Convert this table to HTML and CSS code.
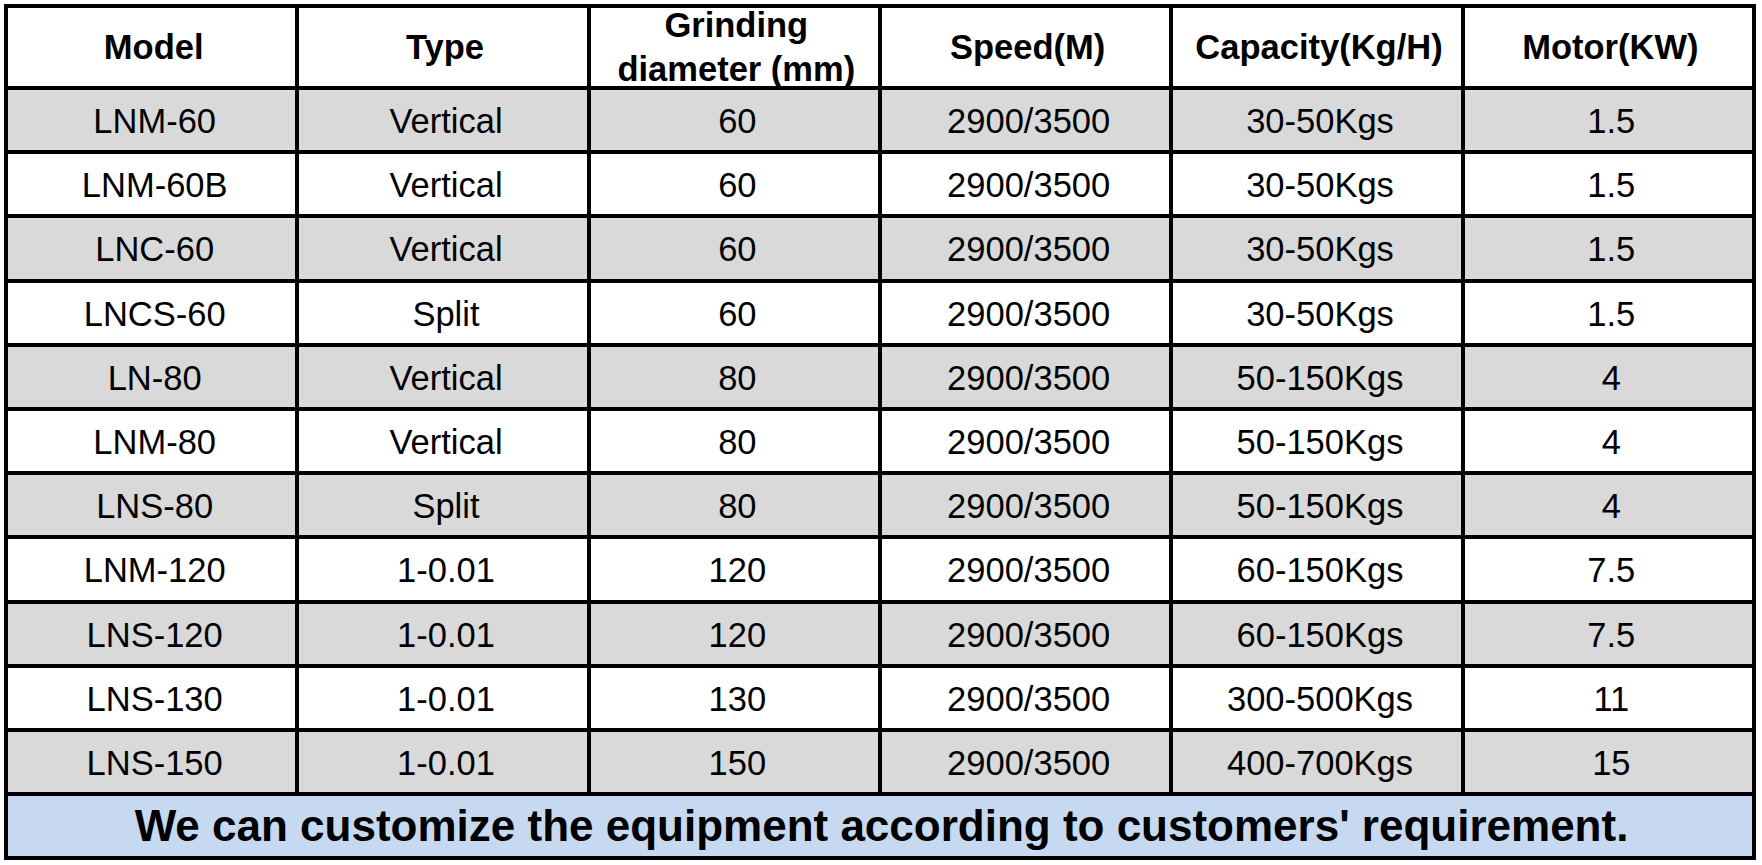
FILE: index.html
```html
<!DOCTYPE html>
<html lang="en">
<head>
<meta charset="utf-8">
<title>Grinding machine specifications</title>
<link rel="stylesheet" href="styles.css">
</head>
<body>
<div class="sheet">
  <div class="row head">
    <div class="cell">Model</div>
    <div class="cell">Type</div>
    <div class="cell">Grinding<br>diameter (mm)</div>
    <div class="cell">Speed(M)</div>
    <div class="cell">Capacity(Kg/H)</div>
    <div class="cell">Motor(KW)</div>
  </div>
  <div class="row alt">
    <div class="cell">LNM-60</div><div class="cell">Vertical</div><div class="cell">60</div><div class="cell">2900/3500</div><div class="cell">30-50Kgs</div><div class="cell">1.5</div>
  </div>
  <div class="row">
    <div class="cell">LNM-60B</div><div class="cell">Vertical</div><div class="cell">60</div><div class="cell">2900/3500</div><div class="cell">30-50Kgs</div><div class="cell">1.5</div>
  </div>
  <div class="row alt">
    <div class="cell">LNC-60</div><div class="cell">Vertical</div><div class="cell">60</div><div class="cell">2900/3500</div><div class="cell">30-50Kgs</div><div class="cell">1.5</div>
  </div>
  <div class="row">
    <div class="cell">LNCS-60</div><div class="cell">Split</div><div class="cell">60</div><div class="cell">2900/3500</div><div class="cell">30-50Kgs</div><div class="cell">1.5</div>
  </div>
  <div class="row alt">
    <div class="cell">LN-80</div><div class="cell">Vertical</div><div class="cell">80</div><div class="cell">2900/3500</div><div class="cell">50-150Kgs</div><div class="cell">4</div>
  </div>
  <div class="row">
    <div class="cell">LNM-80</div><div class="cell">Vertical</div><div class="cell">80</div><div class="cell">2900/3500</div><div class="cell">50-150Kgs</div><div class="cell">4</div>
  </div>
  <div class="row alt">
    <div class="cell">LNS-80</div><div class="cell">Split</div><div class="cell">80</div><div class="cell">2900/3500</div><div class="cell">50-150Kgs</div><div class="cell">4</div>
  </div>
  <div class="row">
    <div class="cell">LNM-120</div><div class="cell">1-0.01</div><div class="cell">120</div><div class="cell">2900/3500</div><div class="cell">60-150Kgs</div><div class="cell">7.5</div>
  </div>
  <div class="row alt">
    <div class="cell">LNS-120</div><div class="cell">1-0.01</div><div class="cell">120</div><div class="cell">2900/3500</div><div class="cell">60-150Kgs</div><div class="cell">7.5</div>
  </div>
  <div class="row">
    <div class="cell">LNS-130</div><div class="cell">1-0.01</div><div class="cell">130</div><div class="cell">2900/3500</div><div class="cell">300-500Kgs</div><div class="cell">11</div>
  </div>
  <div class="row alt">
    <div class="cell">LNS-150</div><div class="cell">1-0.01</div><div class="cell">150</div><div class="cell">2900/3500</div><div class="cell">400-700Kgs</div><div class="cell">15</div>
  </div>
  <div class="note">We can customize the equipment according to customers' requirement.</div>
</div>
</body>
</html>
```

FILE: styles.css
```css
html, body {
  margin: 0;
  padding: 0;
  background: #ffffff;
}

.sheet {
  box-sizing: border-box;
  margin: 4px;
  width: 1752px;
  height: 856px;
  padding: 4px;
  display: grid;
  grid-template-columns: repeat(6, 1fr);
  grid-template-rows: 78px repeat(11, 60.2px) 60px;
  gap: 4px;
  background: #000000;
  font-family: "Liberation Sans", Arial, sans-serif;
  color: #000000;
}

.row {
  display: contents;
}

.cell {
  box-sizing: border-box;
  display: flex;
  align-items: center;
  justify-content: center;
  text-align: center;
  padding: 2px 0 0 6px;
  background: #ffffff;
  font-size: 34.5px;
  line-height: 40px;
}

.row.alt .cell {
  background: #d9d9d9;
}

.row.head .cell {
  padding: 0 0 0 4px;
  font-weight: bold;
  line-height: 44px;
}

.note {
  grid-column: 1 / -1;
  display: flex;
  align-items: center;
  justify-content: center;
  padding-left: 3px;
  background: #c6d9f0;
  font-size: 44px;
  font-weight: bold;
}
```
